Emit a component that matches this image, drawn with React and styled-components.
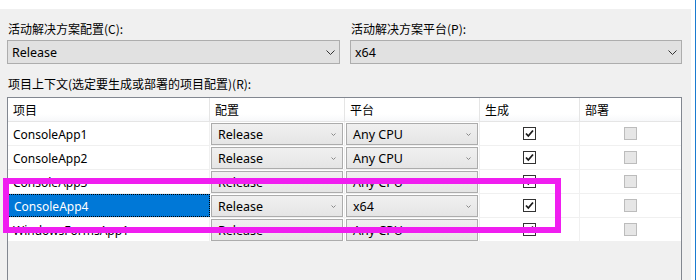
import React from "react";
import styled, { createGlobalStyle } from "styled-components";

const GlobalStyle = createGlobalStyle`
  html, body { margin: 0; padding: 0; background: #ffffff; }
  body {
    font-family: "Noto Sans", "Noto Sans CJK SC", sans-serif;
    font-size: 12px;
    color: #000;
  }
`;

const Window = styled.div`
  position: relative;
  width: 696px;
  height: 280px;
  overflow: hidden;
  background: #ffffff;
  box-sizing: border-box;
  border-right: 1px solid #1a7bd0;
  padding-top: 9px;
  display: flex;
  flex-direction: column;
`;

const Panel = styled.div`
  flex: 1;
  margin-right: 4px;
  background: #f0f0f0;
  padding: 12px 0 0 7px;
  display: flex;
  flex-direction: column;
`;

const TopGrid = styled.div`
  display: grid;
  grid-template-columns: 333px 332px;
  column-gap: 10px;
`;

const Field = styled.div`
  display: flex;
  flex-direction: column;
`;

const Label = styled.div`
  font-family: "Noto Sans CJK SC", sans-serif;
  font-size: 12px;
  line-height: 16px;
  height: 16px;
  margin-bottom: 3px;
  padding-left: ${(p) => p.$indent || 1}px;
  white-space: nowrap;
`;

const Combo = styled.div`
  height: 24px;
  box-sizing: border-box;
  border: 1px solid #adadad;
  background: #e1e1e1;
  display: flex;
  align-items: center;
  justify-content: space-between;
  padding: 0 4px 0 4px;
  font-size: 12.5px;
`;

const ContextLabel = styled(Label)`
  margin-top: 12px;
  margin-bottom: 5px;
`;

const ListView = styled.div`
  width: 675px;
  height: 200px;
  box-sizing: border-box;
  border: 1px solid #828790;
  background: #f0f0f0;
`;

const cols = "202px 135px 135px 100px 101px";

const HeaderRow = styled.div`
  display: grid;
  grid-template-columns: ${cols};
  height: 24px;
  box-sizing: border-box;
  background: linear-gradient(#ffffff, #ffffff 70%, #f7f8fa);
  border-bottom: 1px solid #e5e5e5;
`;

const HeaderCell = styled.div`
  font-family: "Noto Sans CJK SC", sans-serif;
  font-size: 12px;
  display: flex;
  align-items: center;
  padding-left: 5px;
  box-sizing: border-box;
  border-right: 1px solid #e5e5e5;
  &:last-child { border-right: none; }
`;

const Row = styled.div`
  display: grid;
  grid-template-columns: ${cols};
  height: 24px;
  box-sizing: border-box;
  background: #ffffff;
  border-bottom: 1px solid #f0f0f0;
`;

const Cell = styled.div`
  display: flex;
  align-items: center;
  justify-content: ${(p) => (p.$center ? "center" : "flex-start")};
  box-sizing: border-box;
  border-right: 1px solid #f0f0f0;
  padding: 0 1px;
  &:last-child { border-right: none; }
`;

const NameCell = styled(Cell)`
  padding: 1px 5px 0 5px;
  font-size: 12px;
  background: ${(p) => (p.$selected ? "#0078d7" : "#ffffff")};
  color: ${(p) => (p.$selected ? "#ffffff" : "#000000")};
  border: ${(p) => (p.$selected ? "1px dotted #000" : "none")};
  border-right: ${(p) => (p.$selected ? "1px dotted #000" : "1px solid #f0f0f0")};
`;

const CellDrop = styled.div`
  width: 133px;
  height: 22px;
  box-sizing: border-box;
  border: 1px solid #acacac;
  background: linear-gradient(#f0f0f0, #e5e5e5);
  display: flex;
  align-items: center;
  justify-content: space-between;
  padding: 1px 6px 0 6px;
  font-size: 12.5px;
`;

const Box = styled.div`
  width: 13px;
  height: 13px;
  box-sizing: border-box;
  border: 1px solid ${(p) => (p.$disabled ? "#bcbcbc" : "#333333")};
  background: ${(p) => (p.$disabled ? "#e6e6e6" : "#ffffff")};
  display: flex;
  align-items: center;
  justify-content: center;
`;

const Highlight = styled.div`
  position: absolute;
  left: 3px;
  top: 178px;
  width: 558px;
  height: 55px;
  box-sizing: border-box;
  border: 6px solid #f01ef0;
  pointer-events: none;
`;

const BigChevron = () => (
  <svg width="9" height="5" viewBox="0 0 9 5">
    <path d="M0.5 0.5 L4.5 4.5 L8.5 0.5" fill="none" stroke="#333" strokeWidth="1" />
  </svg>
);

const SmallChevron = () => (
  <svg width="5" height="3" viewBox="0 0 5 3">
    <path d="M0.5 0.5 L2.5 2.5 L4.5 0.5" fill="none" stroke="#888" strokeWidth="1" />
  </svg>
);

const Check = () => (
  <svg width="11" height="11" viewBox="0 0 11 11">
    <path d="M2 5.5 L4.3 8 L9 2.5" fill="none" stroke="#1a1a1a" strokeWidth="1.8" />
  </svg>
);

const rows = [
  { name: "ConsoleApp1", config: "Release", platform: "Any CPU" },
  { name: "ConsoleApp2", config: "Release", platform: "Any CPU" },
  { name: "ConsoleApp3", config: "Release", platform: "Any CPU" },
  { name: "ConsoleApp4", config: "Release", platform: "x64", selected: true },
  { name: "WindowsFormsApp1", config: "Release", platform: "Any CPU" },
];

export default function App() {
  return (
    <>
      <GlobalStyle />
      <Window>
        <Panel>
          <TopGrid>
            <Field>
              <Label>活动解决方案配置(C):</Label>
              <Combo>
                <span>Release</span>
                <BigChevron />
              </Combo>
            </Field>
            <Field>
              <Label $indent={0}>活动解决方案平台(P):</Label>
              <Combo>
                <span>x64</span>
                <BigChevron />
              </Combo>
            </Field>
          </TopGrid>
          <ContextLabel>项目上下文(选定要生成或部署的项目配置)(R):</ContextLabel>
          <ListView>
            <HeaderRow>
              <HeaderCell>项目</HeaderCell>
              <HeaderCell>配置</HeaderCell>
              <HeaderCell>平台</HeaderCell>
              <HeaderCell>生成</HeaderCell>
              <HeaderCell>部署</HeaderCell>
            </HeaderRow>
            {rows.map((r) => (
              <Row key={r.name}>
                <NameCell $selected={r.selected}>{r.name}</NameCell>
                <Cell>
                  <CellDrop>
                    <span>{r.config}</span>
                    <SmallChevron />
                  </CellDrop>
                </Cell>
                <Cell>
                  <CellDrop>
                    <span>{r.platform}</span>
                    <SmallChevron />
                  </CellDrop>
                </Cell>
                <Cell $center>
                  <Box>
                    <Check />
                  </Box>
                </Cell>
                <Cell $center>
                  <Box $disabled />
                </Cell>
              </Row>
            ))}
          </ListView>
        </Panel>
        <Highlight />
      </Window>
    </>
  );
}
